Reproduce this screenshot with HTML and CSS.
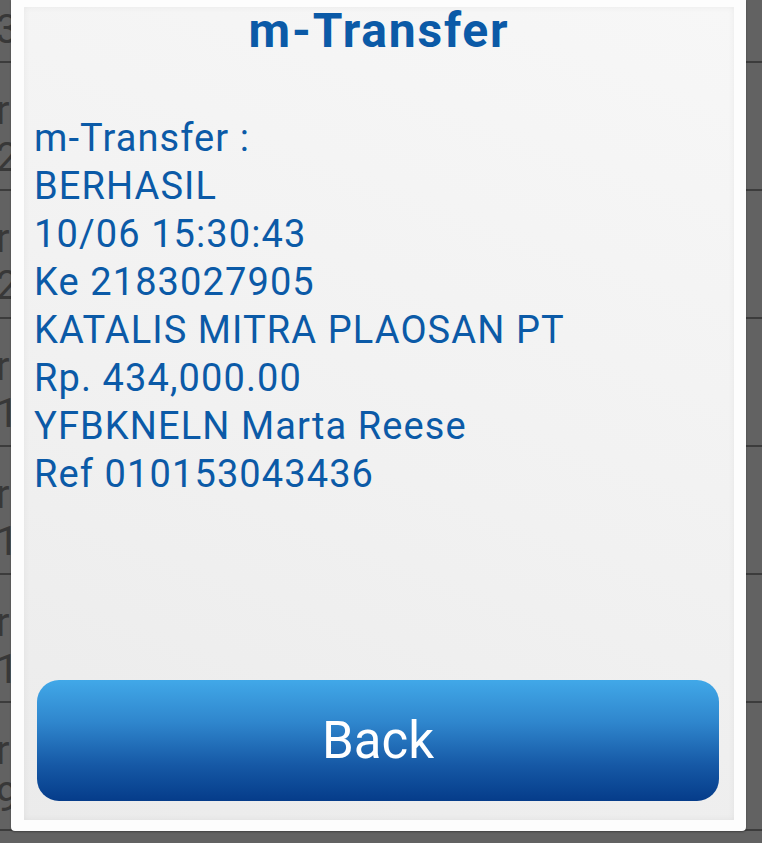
FILE: index.html
```html
<!DOCTYPE html>
<html>
<head>
<meta charset="utf-8">
<link rel="stylesheet" href="styles.css">
</head>
<body>
<div class="list">
  <div class="row"><span class="l1">r</span><span class="l2">3</span></div>
  <div class="row"><span class="l1">r</span><span class="l2">2</span></div>
  <div class="row"><span class="l1">r</span><span class="l2">2</span></div>
  <div class="row"><span class="l1">r</span><span class="l2">1</span></div>
  <div class="row"><span class="l1">r</span><span class="l2">1</span></div>
  <div class="row"><span class="l1">r</span><span class="l2">1</span></div>
  <div class="row"><span class="l1">r</span><span class="l2">9</span></div>
</div>
<div class="dialog">
  <div class="panel">
    <h1 class="title">m-Transfer</h1>
    <div class="message">
      <div>m-Transfer :</div>
      <div>BERHASIL</div>
      <div>10/06 15:30:43</div>
      <div>Ke 2183027905</div>
      <div>KATALIS MITRA PLAOSAN PT</div>
      <div>Rp. 434,000.00</div>
      <div>YFBKNELN Marta Reese</div>
      <div>Ref 010153043436</div>
    </div>
    <button class="back">Back</button>
  </div>
</div>
</body>
</html>
```
FILE: styles.css
```css
html, body {
  margin: 0;
  padding: 0;
  height: 100%;
  overflow: hidden;
}
body {
  background: #626262;
  font-family: Roboto, "Liberation Sans", sans-serif;
  position: relative;
}
.list {
  margin-top: -65px;
}
.row {
  height: 128px;
  box-sizing: border-box;
  overflow: hidden;
  border-bottom: 2px solid #3c3c3c;
  color: #383838;
  font-size: 40px;
  line-height: 47px;
  display: flex;
  flex-direction: column;
  padding-top: 24px;
}
.row span {
  margin-left: -4px;
}
.dialog {
  position: absolute;
  top: 0;
  left: 11px;
  width: 735px;
  height: 831px;
  background: #fdfdfd;
  border-radius: 0 0 4px 4px;
  box-sizing: border-box;
  padding: 7px 12px 11px 13px;
  box-shadow: 0 1px 2px rgba(0,0,0,0.35);
}
.panel {
  height: 100%;
  background: linear-gradient(200deg, #f7f7f7 0%, #f1f1f1 55%, #ebebeb 100%);
  box-shadow: inset 0 0 6px rgba(0,0,0,0.06);
  display: flex;
  flex-direction: column;
}
.title {
  margin: 0;
  text-align: center;
  font-size: 48px;
  letter-spacing: 1.8px;
  font-weight: bold;
  line-height: 48px;
  color: #0b5aa7;
}
.message {
  margin-top: 59px;
  padding-left: 10px;
  font-size: 38px;
  letter-spacing: 1.1px;
  line-height: 48px;
  color: #0b5aa7;
}
.back {
  margin: auto 15px 19px 13px;
  height: 121px;
  border: none;
  border-radius: 22px;
  background: linear-gradient(180deg, #41a8e8 0%, #2f86cd 35%, #1659a6 70%, #053c8a 100%);
  color: #ffffff;
  font-family: Roboto, "Liberation Sans", sans-serif;
  font-size: 51px;
  padding: 0;
}
```
